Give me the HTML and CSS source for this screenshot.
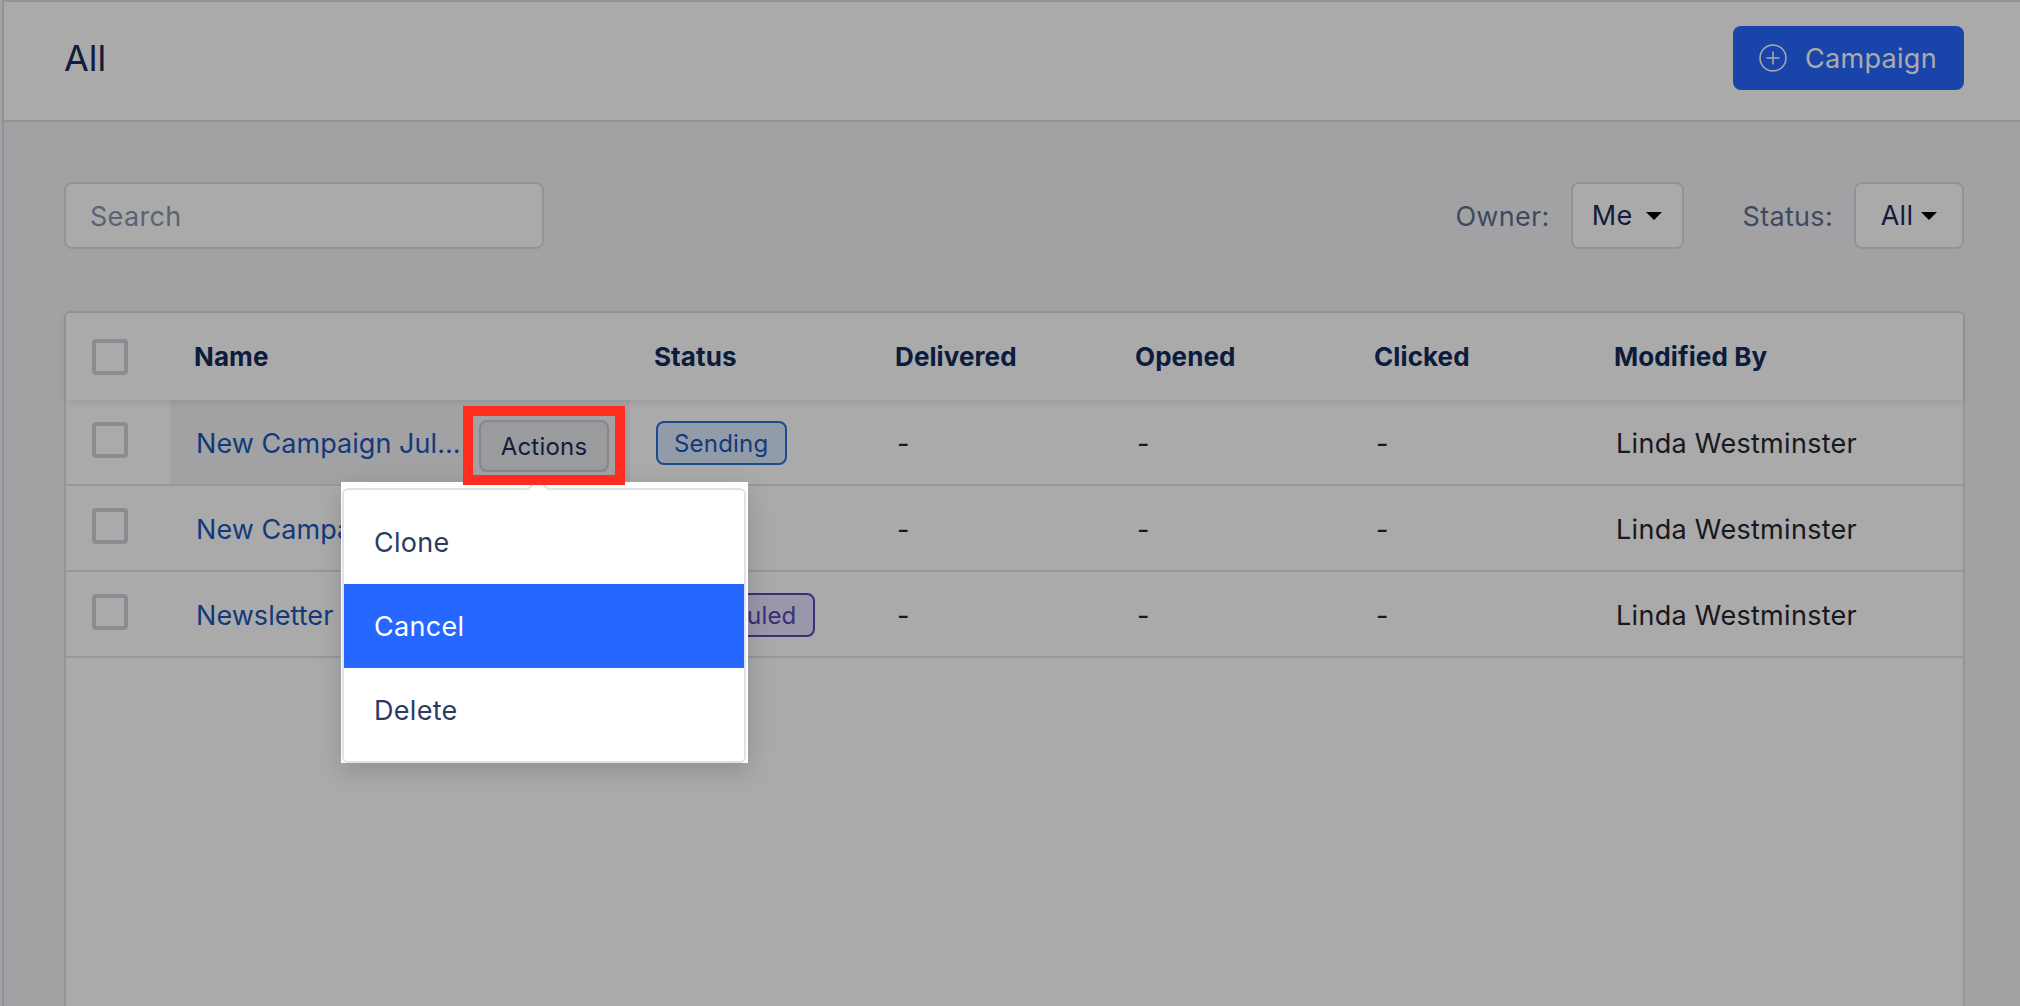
FILE: index.html
```html
<!DOCTYPE html>
<html lang="en">
<head>
    <meta charset="UTF-8">
    <meta name="viewport" content="width=device-width, initial-scale=1.0">
    <title>Campaigns</title>
    <link rel="stylesheet" href="styles.css">
</head>
<body>
    <div class="page">
        <header class="top-bar">
            <h1>All</h1>
            <button class="new-button">
                <svg class="plus-icon" viewBox="0 0 28 28" fill="none" stroke="currentColor" stroke-width="1.5">
                    <circle cx="14" cy="14" r="13"/>
                    <path d="M14 7.5v13M7.5 14h13"/>
                </svg>
                Campaign
            </button>
        </header>

        <div class="content">
            <div class="toolbar">
                <div class="search-box">Search</div>
                <div class="filters">
                    <span class="filter-label">Owner:</span>
                    <div class="select select-owner">Me<span class="caret"></span></div>
                    <span class="filter-label status-label">Status:</span>
                    <div class="select select-status">All<span class="caret"></span></div>
                </div>
            </div>

            <div class="table-card">
                <div class="row head-row">
                    <div class="cell check-cell"><span class="checkbox"></span></div>
                    <div class="cell">Name</div>
                    <div class="cell">Status</div>
                    <div class="cell">Delivered</div>
                    <div class="cell">Opened</div>
                    <div class="cell">Clicked</div>
                    <div class="cell">Modified By</div>
                </div>

                <div class="row">
                    <div class="cell check-cell"><span class="checkbox"></span></div>
                    <div class="cell name-cell hovered">
                        <a class="name-link">New Campaign Jul…</a>
                        <div class="actions-wrap">
                            <button class="actions-button">Actions</button>
                            <div class="callout"></div>
                            <div class="popover-frame">
                                <div class="popover">
                                    <span class="popover-arrow"></span>
                                    <div class="menu-item">Clone</div>
                                    <div class="menu-item active">Cancel</div>
                                    <div class="menu-item">Delete</div>
                                </div>
                            </div>
                        </div>
                    </div>
                    <div class="cell"><span class="badge badge-sending">Sending</span></div>
                    <div class="cell">-</div>
                    <div class="cell">-</div>
                    <div class="cell">-</div>
                    <div class="cell">Linda Westminster</div>
                </div>

                <div class="row">
                    <div class="cell check-cell"><span class="checkbox"></span></div>
                    <div class="cell name-cell"><a class="name-link">New Campaign Jul…</a></div>
                    <div class="cell"></div>
                    <div class="cell">-</div>
                    <div class="cell">-</div>
                    <div class="cell">-</div>
                    <div class="cell">Linda Westminster</div>
                </div>

                <div class="row">
                    <div class="cell check-cell"><span class="checkbox"></span></div>
                    <div class="cell name-cell"><a class="name-link">Newsletter</a></div>
                    <div class="cell"><span class="badge badge-scheduled">Scheduled</span></div>
                    <div class="cell">-</div>
                    <div class="cell">-</div>
                    <div class="cell">-</div>
                    <div class="cell">Linda Westminster</div>
                </div>
            </div>
        </div>
    </div>

    <div class="overlay"></div>
</body>
</html>
```

FILE: styles.css
```css
* {
    margin: 0;
    padding: 0;
    box-sizing: border-box;
}

html, body {
    height: 100%;
    overflow: hidden;
}

body {
    font-family: Inter, "Liberation Sans", sans-serif;
    font-size: 27px;
    letter-spacing: 0.3px;
    background-color: #f3f4f6;
    color: #26262c;
    padding-left: 2px;
}

button {
    font-family: inherit;
    letter-spacing: inherit;
}

.page {
    height: 100%;
    display: flex;
    flex-direction: column;
    border-left: 2px solid #dcdde3;
}

.overlay {
    position: fixed;
    inset: 0;
    background: rgba(0, 0, 0, 0.335);
    z-index: 10;
}

/* top bar */
.top-bar {
    display: flex;
    justify-content: space-between;
    align-items: flex-start;
    background: white;
    border-top: 2px solid #dcdde3;
    border-bottom: 2px solid #dcdde3;
    height: 122px;
    padding: 24px 56px 0 60px;
}

.top-bar h1 {
    font-size: 36px;
    font-weight: 400;
    letter-spacing: 0;
    color: #1b2b5e;
    line-height: 64px;
}

.new-button {
    display: flex;
    align-items: center;
    gap: 18px;
    width: 231px;
    height: 64px;
    padding-left: 26px;
    background: #2667ff;
    border: none;
    border-radius: 8px;
    color: white;
    font-size: 27px;
    letter-spacing: 0.3px;
}

.plus-icon {
    width: 28px;
    height: 28px;
}

/* search and filters */
.content {
    flex-grow: 1;
    display: flex;
    flex-direction: column;
    padding: 60px 55px 0 60px;
}

.toolbar {
    display: flex;
    justify-content: space-between;
    margin-bottom: 62px;
    padding-right: 1px;
}

.search-box {
    width: 480px;
    height: 67px;
    display: flex;
    align-items: center;
    padding: 2px 0 0 24px;
    background: white;
    border: 2px solid #dcdde3;
    border-radius: 8px;
    color: #8697b2;
}

.filters {
    display: flex;
    align-items: center;
}

.filter-label {
    color: #5e6f8f;
    margin-right: 21px;
    padding-top: 2px;
}

.status-label {
    margin-left: 59px;
}

.select {
    height: 67px;
    display: flex;
    align-items: center;
    justify-content: center;
    background: white;
    border: 2px solid #dcdde3;
    border-radius: 8px;
    color: #1b2b5e;
}

.select-owner {
    width: 113px;
    gap: 14px;
}

.select-status {
    width: 110px;
    gap: 8px;
}

.caret {
    width: 0;
    height: 0;
    border-left: 8px solid transparent;
    border-right: 8px solid transparent;
    border-top: 8px solid black;
}

/* table */
.table-card {
    flex-grow: 1;
    background: white;
    border: 2px solid #e0e1e6;
    border-bottom: none;
    border-radius: 6px 6px 0 0;
}

.row {
    display: grid;
    grid-template-columns: 104px 460px 241px 240px 239px 240px 1fr;
    height: 86px;
    border-bottom: 2px solid #e2e4e9;
}

.cell {
    display: flex;
    align-items: center;
    padding: 2px 0 0 26px;
}

.check-cell {
    padding: 0 0 4px 26px;
}

.checkbox {
    width: 36px;
    height: 36px;
    border: 4px solid #d1d3da;
    border-radius: 4px;
    background: white;
}

.head-row {
    position: relative;
    height: 87px;
    border-bottom: none;
    box-shadow: 0 2px 8px rgba(0, 0, 0, 0.1);
    font-size: 26px;
    font-weight: 700;
    letter-spacing: 0.1px;
    color: #112a5b;
}

.head-row .cell {
    padding: 0 0 0 24px;
}

.head-row .check-cell {
    padding: 0 0 0 26px;
}

.hovered {
    background: #f3f4f6;
}

.name-link {
    display: block;
    width: 262px;
    color: #1b57b9;
    white-space: nowrap;
    letter-spacing: 0.05px;
}

.actions-wrap {
    position: relative;
    margin: 6px 0 0 21px;
}

.actions-button {
    display: block;
    width: 130px;
    height: 52px;
    background: #e8e9eb;
    border: 2px solid #c9cbd1;
    border-radius: 8px;
    color: #1b2b5e;
    font-size: 24px;
    letter-spacing: 0.2px;
}

.callout {
    position: absolute;
    left: -16px;
    top: -14px;
    width: 162px;
    height: 79px;
    border: 10px solid #ff2d20;
    z-index: 22;
}

.popover-frame {
    position: absolute;
    left: -138px;
    top: 62px;
    width: 407px;
    height: 281px;
    padding: 6px 2px 0 1px;
    background: white;
    box-shadow: 0 8px 24px rgba(0, 0, 0, 0.16);
    z-index: 20;
}

.popover {
    position: relative;
    height: 100%;
    padding-top: 10px;
    background: white;
    border: 2px solid #dde3ea;
    border-radius: 6px;
}

.popover-arrow {
    position: absolute;
    left: 186px;
    top: -9px;
    width: 16px;
    height: 16px;
    background: white;
    border-left: 2px solid #dde3ea;
    border-top: 2px solid #dde3ea;
    transform: rotate(45deg);
}

.menu-item {
    height: 84px;
    display: flex;
    align-items: center;
    padding-left: 30px;
    color: #2e3b60;
}

.menu-item.active {
    background: #2667ff;
    color: white;
}

.badge {
    display: flex;
    align-items: center;
    height: 44px;
    padding: 0 17px 0 16px;
    border: 2px solid;
    border-radius: 8px;
    font-size: 24px;
    letter-spacing: 0.2px;
}

.badge-sending {
    width: 131px;
    background: #dbeafe;
    border-color: #2a6fd8;
    color: #1b57b9;
}

.badge-scheduled {
    background: #e9e3ff;
    border-color: #5548b8;
    color: #5548b8;
}
```
